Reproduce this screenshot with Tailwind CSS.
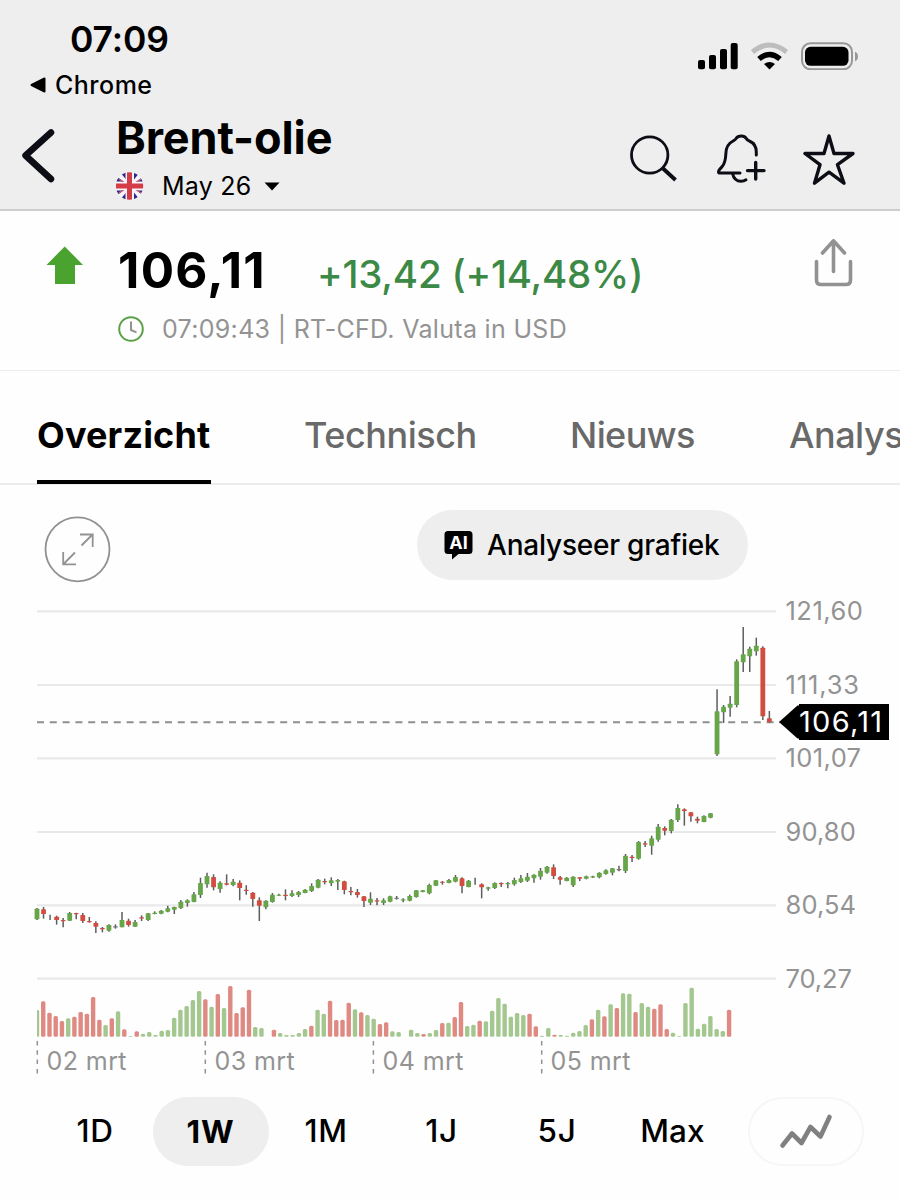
<!DOCTYPE html>
<html lang="nl">
<head>
<meta charset="utf-8">
<meta name="viewport" content="width=device-width">
<title>Brent-olie</title>
<script src="https://cdn.jsdelivr.net/npm/@tailwindcss/browser@4"></script>
</head>
<body class="w-[900px] h-[1200px] overflow-hidden bg-[#fefefe] font-['Inter','Liberation_Sans',sans-serif] text-black whitespace-nowrap">

<header class="h-[211px] flex flex-col bg-[#eeeeee] border-b-2 border-[#cdcdcd]">
  <!-- Status bar -->
  <div class="h-[104px] flex justify-between">
    <div class="pt-5">
      <div class="h-10 leading-10 pl-[70px] text-[35.500px] font-semibold tracking-[-0.1px]">07:09</div>
      <div class="mt-[10px] h-[30px] pl-[30px] flex items-center gap-[9px]">
        <svg class="w-4 h-4" viewBox="0 0 16 16"><path d="M1.5 8 14.500 1.500v13z" stroke="#000" stroke-width="2" stroke-linejoin="round"/></svg>
        <span class="text-[25px] leading-[30px] font-medium tracking-[0.5px]">Chrome</span>
      </div>
    </div>
    <div class="h-7 mt-[42px] mr-[41px] flex gap-[13px]">
      <svg class="w-10 h-7" viewBox="0 0 40 28"><rect y="18" width="7" height="9.300" rx="2"/><rect x="11" y="13" width="7" height="14.300" rx="2"/><rect x="22" y="7" width="7" height="20.300" rx="2"/><rect x="32.700" y="1" width="7" height="26.300" rx="2"/></svg>
      <svg class="w-[37px] h-7" viewBox="0 0 37 28" fill="none">
        <path d="M1.500 10Q18.500-4 35.500 10" stroke="#bdbdbd" stroke-width="5"/>
        <path d="M8 17Q18.500 8 29 17" stroke="#000" stroke-width="5.500"/>
        <path d="M18.500 27.500 13 22Q18.500 18 24 22z" fill="#000"/>
      </svg>
      <svg class="w-[58px] h-7" viewBox="0 0 58 28"><rect x="1" y="1.300" width="50" height="26" rx="8.500" fill="none" stroke="#989898" stroke-width="2"/><rect x="4" y="4.800" width="43.500" height="19" rx="5.500"/><path d="M54 9.800q3 1 3 4.700t-3 4.700z" fill="#989898"/></svg>
    </div>
  </div>
  <!-- Navigation -->
  <div class="h-[105px] flex">
    <svg class="mt-6 ml-5 w-9 h-[56px]" viewBox="0 0 36 56" fill="none"><path d="M31 4.500 5.500 27.500 31 51" stroke="#0c0d15" stroke-width="6.500" stroke-linecap="round" stroke-linejoin="round"/></svg>
    <div class="ml-[60px] pt-3 w-[500px]">
      <h1 class="h-11 leading-[44px] text-[45px] font-bold tracking-[-0.1px]">Brent-olie</h1>
      <div class="mt-[11px] h-[30px] flex items-center">
        <svg class="w-7 h-7" viewBox="0 0 28 28">
          <clipPath id="flag"><circle cx="13.500" cy="14" r="13.700"/></clipPath>
          <g clip-path="url(#flag)"><path fill="#f7f5fb" d="M0 0h28v28H0z"/>
          <path fill="#2c2b8c" d="M4 0h6v7.500zM18 0h6l-6 7.500zM0 4l7.500 5.500H0zM28 4v5.500h-7.500zM0 24v-5.500h7.500zM28 24v-5.500h-7.500zM4 28l6-7.500V28zM24 28l-6-7.500V28z"/>
          <path stroke="#d65a64" stroke-width="1.300" d="M3 7l5 3.500M25 7l-5 3.500M3 21l5-3.500M25 21l-5-3.500"/>
          <path fill="#f7f5fb" d="M9.500 0h8v28h-8zM0 10h28v8H0z"/><path fill="#d43c46" d="M11 0h5v28h-5zM0 11.500h28v5H0z"/></g>
        </svg>
        <span class="ml-[18px] text-[25px] leading-[30px] tracking-[0.25px]">May 26</span>
        <svg class="ml-[12px] w-4 h-[9px]" viewBox="0 0 16 9"><path d="M.5.5h15L8 8.500z"/></svg>
      </div>
    </div>
    <div class="ml-[14px] mt-[29px] flex">
      <svg class="w-[48px] h-[52px]" viewBox="0 0 48 52" fill="none" stroke="#0c0d15" stroke-width="2.800"><circle cx="19.700" cy="22" r="18.200"/><path d="m32.500 35 13 12" stroke-width="3.800"/></svg>
      <svg class="ml-[37.500px] w-[50px] h-[52px]" viewBox="0 0 50 52" fill="none" stroke="#0c0d15" stroke-width="3" stroke-linecap="round" stroke-linejoin="round">
        <path d="M40.300 22v-3c0-5.500-2.200-9-7-11-2-1-2.500-1.500-3-2.500-1-1.600-3-2.500-5-2.500s-4.200.8-5.200 2.500c-.5 1.200-1.500 1.700-3 2.500-5 2.500-7 6.500-7.200 12.200-.3 7.500-1 10.500-4 13.700-3 3.200-4 4.500-3.200 6H24"/>
        <path d="M16.500 40.500c1 4.500 4 7.800 8.500 7.800 2.300 0 3.500-.4 5-1.500"/>
        <path d="M31.500 37.600H48M39.700 29.500v16.500" stroke-width="3.400"/>
      </svg>
      <svg class="ml-[37.500px] w-[52px] h-[54px]" viewBox="0 0 52 54" fill="none" stroke="#0c0d15" stroke-width="3.400" stroke-linejoin="round"><path d="m26 3 5 17.500h19L34.500 31.700l6.500 18.500-15-11-14.500 11 5.500-18.500L2 20.500h19z"/></svg>
    </div>
  </div>
</header>

<!-- Quote -->
<section class="h-[160px] flex border-b border-[#ededed]">
  <svg class="ml-[46px] mt-[35px] w-[37px] h-[38px]" viewBox="0 0 37 38"><path fill="#4aa32f" d="M18.700.5 37 19h-8v19H9V19H.5z"/></svg>
  <div class="ml-[35px] w-[540px]">
    <div class="mt-[35px] h-12 flex">
      <span class="w-[199px] text-[49.500px] leading-[48px] font-bold tracking-[1.3px]">106,11</span>
      <span class="pt-1 text-[38.500px] leading-[48px] font-medium tracking-[-0.2px] text-[#3c8945]">+13,42 (+14,48%)</span>
    </div>
    <div class="mt-5 h-[30px] flex items-center">
      <svg class="-ml-px w-7 h-7" viewBox="0 0 28 28" fill="none"><circle cx="14" cy="14" r="11.800" stroke="#5aa046" stroke-width="2"/><path d="M14 6.500V15l5.500 2.300" stroke="#929292" stroke-width="2"/></svg>
      <span class="ml-[17px] text-[25px] leading-[30px] tracking-[0.31px] text-[#939393]">07:09:43 | RT-CFD. Valuta in USD</span>
    </div>
  </div>
  <svg class="ml-[155px] mt-[27px] w-10 h-[50px]" viewBox="0 0 40 50" fill="none" stroke="#929292" stroke-width="3.600" stroke-linecap="round" stroke-linejoin="round"><path d="M3.500 23.500V42q0 4.500 4.500 4.500h25q4.500 0 4.500-4.500V23.500M20.500 33.500V2.800M9.500 15 20.500 2.800 31.500 15"/></svg>
</section>

<!-- Tabs -->
<nav class="h-[114px] pl-[37px] flex gap-[93px] border-b-2 border-[#ececec] text-[36px] leading-[40px] font-medium text-[#696969] overflow-x-clip">
  <div class="w-[174px] shrink-0 h-[113px] pt-[44px] border-b-4 border-black font-bold text-black tracking-[0.16px]">Overzicht</div>
  <div class="w-[173px] shrink-0 pt-[44px] tracking-[-0.45px]">Technisch</div>
  <div class="w-[126px] shrink-0 pt-[44px] tracking-[-0.6px]">Nieuws</div>
  <div class="shrink-0 pt-[44px] tracking-[-0.5px]">Analyse</div>
</nav>

<!-- Chart tools -->
<div class="h-[95px] pt-[25px] pl-[44px] flex">
  <svg class="mt-[6px] w-[67px] h-[67px]" viewBox="0 0 67 67" fill="none" stroke="#929292" stroke-width="1.800"><circle cx="33.500" cy="33.300" r="32"/><path d="M37.500 29.500 48.500 18.500M36 18.500h12.700v12.500M31 36.500 19.500 48M19.200 36v12.300H32"/></svg>
  <button class="ml-[306px] w-[331px] h-[70px] rounded-full bg-[#eeeeee] pl-[27px] flex items-center">
    <span class="w-[29px] h-[30px] relative flex justify-center">
      <svg class="absolute inset-0 w-[29px] h-[30px]" viewBox="0 0 29 30"><path d="M4 1h21q3.500 0 3.500 3.500v16q0 3.500-3.500 3.500H14.500L8 29.500V24H4Q.5 24 .5 20.500v-16Q.5 1 4 1z"/></svg>
      <span class="relative text-white text-[18px] leading-[25px] font-bold">AI</span>
    </span>
    <span class="ml-[14px] text-[28px] font-medium tracking-[-0.21px]">Analyseer grafiek</span>
  </button>
</div>

<!-- Price and volume chart -->
<div class="relative h-[497px] flex">
  <svg id="chart" class="w-[780px] h-[497px]" viewBox="0 580 780 497"></svg>
  <div class="pl-[5.500px] pt-[11px] flex flex-col gap-[33.500px] text-[25.500px] leading-[40px] text-[#939393]">
    <span class="tracking-[0.5px]">121,60</span><span class="tracking-[0.85px]">111,33</span><span class="tracking-[0.4px]">101,07</span><span class="tracking-[0.1px]">90,80</span><span class="tracking-[0.1px]">80,54</span><span class="tracking-[-0.1px]">70,27</span>
  </div>
  <div class="absolute left-[779px] top-[124px] flex items-center">
    <svg class="w-5 h-9" viewBox="0 0 20 36"><path d="M0 18 18.500 1.500H20v33h-1.500z"/></svg>
    <span class="w-[90px] h-9 bg-black text-white text-[29px] leading-9 tracking-[1.3px]">106,11</span>
  </div>
  <div class="absolute left-[46.500px] bottom-0 flex text-[25px] leading-8 text-[#939393] tracking-[0.42px]">
    <span class="w-[168px]">02 mrt</span><span class="w-[168px]">03 mrt</span><span class="w-[168px]">04 mrt</span><span class="w-[168px]">05 mrt</span>
  </div>
</div>

<!-- Time ranges -->
<div class="mt-[19px] h-[70px] ml-[37.500px] flex items-center text-[31.500px] font-medium">
  <span class="w-[115px] text-center tracking-[0.6px]">1D</span>
  <span class="w-[116px] h-[69px] leading-[69px] rounded-full bg-[#eeeeee] text-center font-bold tracking-[0.8px]">1W</span>
  <span class="w-[115px] text-center tracking-[0.6px]">1M</span>
  <span class="w-[116px] text-center tracking-[0.6px]">1J</span>
  <span class="w-[115px] text-center tracking-[0.6px]">5J</span>
  <span class="w-[116px] text-center tracking-[0.1px]">Max</span>
  <span class="ml-[17.500px] w-[116px] h-[69px] rounded-full border-2 border-[#f6f6f6] flex justify-center items-center">
    <svg class="w-[54px] h-9" viewBox="0 0 54 36" fill="none"><path d="M3.500 32.500 13 20.500l9.500 9.500L31.500 14l10 9.500L50.500 4" stroke="#808080" stroke-width="4.600" stroke-linecap="round" stroke-linejoin="round"/></svg>
  </span>
</div>

<script>
// Candles: colour, high, body top, body bottom, low (thirds of a pixel below y=600)
const groups = [
 [720, `G204,206,238,240 R201,208,222,236 N224,0,0,240 R227,230,240,254 R234,240,243,262 G216,219,242,243 R218,219,222,238 R219,225,243,249 R231,243,246,248 R244,249,260,279 R261,264,267,277 G253,255,272,275 N253,259,261,266 G216,240,262,262 R236,242,255,260 G240,246,260,261 R226,232,235,243 G219,220,240,243 G214,218,222,223 G210,212,221,223 G197,205,215,217 G200,201,209,222 G180,185,204,207 G178,181,189,200 G156,163,186,187 G113,129,165,174 G98,108,133,143 R103,111,142,151 G124,128,147,158 R103,130,134,136 G117,125,135,139 R121,128,144,181 R136,149,153,164 R156,158,177,200 R172,181,197,243 G181,182,202,208 G159,164,186,188 G161,164,167,168 R148,164,168,181 G151,160,168,171 G153,156,165,171 G147,149,159,160 G130,138,153,156 G117,119,143,145 R116,123,126,133 G112,121,130,138 G117,120,125,150 R122,124,150,163 R141,153,156,166 R147,156,165,173 R168,169,183,201 G157,176,188,195 R174,181,184,196 G175,181,189,195 G167,169,185,187 N168,173,175,179 G175,178,180,187 G164,168,182,184 G150,151,171,173 G150,151,156,157 G131,135,160,163 G120,121,137,138 R123,125,128,134 G117,120,129,130 G105,111,125,127 R112,115,138,160 G120,122,141,142 N113,0,0,134 R130,133,142,175 G140,142,146,152 G127,129,144,147`],
 [570, `R277,279,283,291 G276,279,283,295 G263,270,283,287 G255,265,276,279 G249,260,272,276 G253,254,265,278 G234,242,260,269 G228,230,248,251 R223,232,258,267 R258,262,269,284 G261,263,273,274 G259,260,286,291 R261,262,266,273 G257,259,266,268 G257,259,262,264 G247,248,262,265 G238,241,252,254 G234,235,248,256 N227,237,240,244 G192,197,243,249 R195,200,204,216 G153,156,206,209 R153,160,163,171 G137,145,167,194 G102,110,149,155 R109,114,122,136 G87,89,123,130 G43,54,90,96 R55,58,63,107 R66,67,79,95 R80,86,92,100 G76,78,96,97 G69,70,83,85`],
 [0, `G268,334,463,468 G315,320,337,369 G288,311,323,350 G178,184,315,322 G81,163,187,216 G140,146,169,216 G113,137,154,167 R139,143,349,360 R333,355,366,368`]
];
// Volume: slot colour and bar top (thirds of a pixel below y=970)
const volume = `G120 R94 R128 R138 R153 G145 R140 R126 R131 R81 R149 G165 R145 G124 R178 G198 R184 G191 G186 G195 G182 G180 G143 G119 G108 G90 G63 R88 G110 R72 G114 R48 R129 R112 R59 G171 G174 - R179 G189 G195 G195 G189 G177 R167 G119 G131 R92 R150 R149 R98 G118 R127 G135 G146 R162 R157 G184 G186 - G179 G189 R192 G189 G180 R159 G158 R141 R96 G168 G164 R152 G154 G122 G84 G101 G140 G129 G135 R131 R169 G197 G174 R194 G195 G197 G188 G183 G165 R148 G119 R139 G103 R114 G70 G71 R126 G99 G110 R116 R103 R177 G188 G198 G99 G53 G176 G161 G138 G177 G183 R119`;
let s = '';
for (const y of [611.3, 685, 758.3, 832, 905.3, 978.7]) s += `<path d="M37 ${y}H776" stroke="#e9e9e9" stroke-width="2.2"/>`;
s += '<path d="M37 722.300H780" stroke="#8f8f8f" stroke-width="2" stroke-dasharray="7 5.800"/>';
for (const x of [37.3, 205.3, 373.4, 541.7]) s += `<path d="M${x} 1041V1074" stroke="#929292" stroke-width="1.500" stroke-dasharray="4.500 4.800"/>`;
let i = 0;
for (const [off, txt] of groups) for (const t of txt.split(' ')) {
  const [h, a, b, l] = t.slice(1).split(',').map(v => 600 + (+v + off) / 3);
  const x = 37 + 6.539 * i++, c = { G: '#66a548', R: '#d24c40', N: '#77707c' }[t[0]];
  s += `<path d="M${x} ${h}V${l}" stroke="#5d5d5d" stroke-width="1.500"/>`;
  if (a > 600 + off / 3) s += `<rect x="${x - 2.4}" y="${a}" width="4.800" height="${Math.max(b - a, 1.2)}" rx=".6" fill="${c}"/>`;
}
s += '<clipPath id="vc"><path d="M37 980h740v60H37z"/></clipPath><g clip-path="url(#vc)">';
volume.split(' ').forEach((t, k) => {
  if (t === '-') return;
  const y = 970 + t.slice(1) / 3, x = 37 + 6.235 * k;
  s += `<rect x="${x - 2.2}" y="${y}" width="4.400" height="${1036.7 - y}" rx="1.500" fill="${t[0] === 'G' ? '#a3c78f' : '#de8a82'}"/>`;
});
document.getElementById('chart').innerHTML = s + '</g>';
</script>
</body>
</html>
